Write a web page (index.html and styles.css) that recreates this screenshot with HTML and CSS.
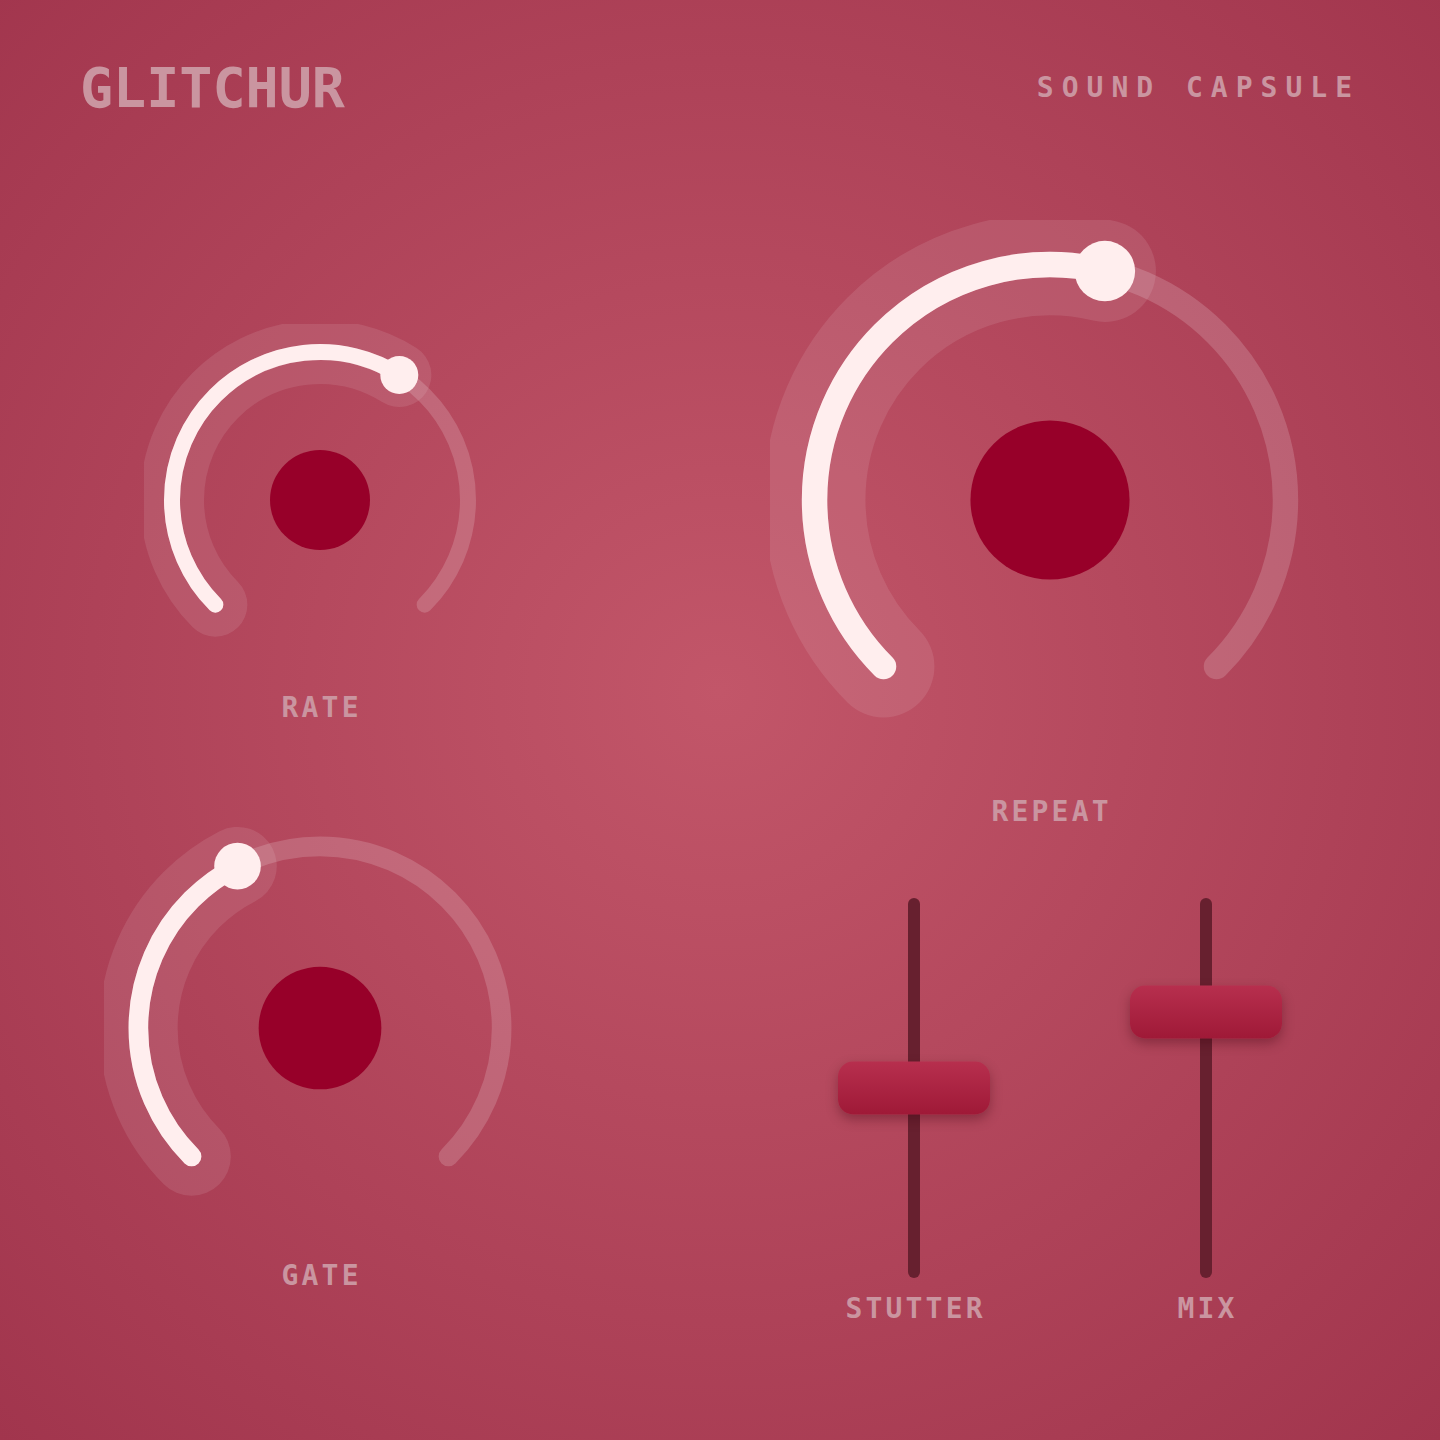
FILE: index.html
```html
<!DOCTYPE html>
<html lang="en">

<head>
	<meta charset="UTF-8">
	<meta name="viewport" content="width=device-width, initial-scale=1.0">
	<title>Glitchur - Sound Capsule</title>
	<link rel="stylesheet" href="styles.css">
</head>

<body>
	<div class="panel">
		<header class="header">
			<h1 class="brand">GLITCHUR</h1>
			<span class="tagline">SOUND CAPSULE</span>
		</header>

		<main class="controls">
			<div class="column column-left">
				<!-- RATE: value 0.62 -->
				<div class="knob">
					<svg class="knob-svg knob-sm" viewBox="0 0 352 352">
						<path class="knob-track" pathLength="270" d="M71.35 280.65 A148 148 0 1 1 280.65 280.65" />
						<path class="knob-halo" pathLength="270" stroke-dasharray="167.4 999" d="M71.35 280.65 A148 148 0 1 1 280.65 280.65" />
						<path class="knob-value" pathLength="270" stroke-dasharray="167.4 999" d="M71.35 280.65 A148 148 0 1 1 280.65 280.65" />
						<circle class="knob-thumb" cx="255.3" cy="51" r="19" />
						<circle class="knob-dot" cx="176" cy="176" r="50" />
					</svg>
					<div class="label">RATE</div>
				</div>

				<!-- GATE: value 0.40 -->
				<div class="knob knob-gate">
					<svg class="knob-svg knob-md" viewBox="0 0 352 352">
						<path class="knob-track" pathLength="270" d="M71.35 280.65 A148 148 0 1 1 280.65 280.65" />
						<path class="knob-halo" pathLength="270" stroke-dasharray="108 999" d="M71.35 280.65 A148 148 0 1 1 280.65 280.65" />
						<path class="knob-value" pathLength="270" stroke-dasharray="108 999" d="M71.35 280.65 A148 148 0 1 1 280.65 280.65" />
						<circle class="knob-thumb" cx="108.8" cy="44.1" r="19" />
						<circle class="knob-dot" cx="176" cy="176" r="50" />
					</svg>
					<div class="label">GATE</div>
				</div>
			</div>

			<div class="column column-right">
				<!-- REPEAT: value 0.55 -->
				<div class="knob">
					<svg class="knob-svg knob-lg" viewBox="0 0 352 352">
						<path class="knob-track" pathLength="270" d="M71.35 280.65 A148 148 0 1 1 280.65 280.65" />
						<path class="knob-halo" pathLength="270" stroke-dasharray="148.5 999" d="M71.35 280.65 A148 148 0 1 1 280.65 280.65" />
						<path class="knob-value" pathLength="270" stroke-dasharray="148.5 999" d="M71.35 280.65 A148 148 0 1 1 280.65 280.65" />
						<circle class="knob-thumb" cx="210.5" cy="32.1" r="19" />
						<circle class="knob-dot" cx="176" cy="176" r="50" />
					</svg>
					<div class="label">REPEAT</div>
				</div>

				<div class="sliders">
					<div class="slider">
						<div class="slider-rail">
							<div class="slider-track"></div>
							<div class="slider-thumb" style="top: 50%"></div>
						</div>
						<div class="label label-slider">STUTTER</div>
					</div>
					<div class="slider">
						<div class="slider-rail">
							<div class="slider-track"></div>
							<div class="slider-thumb" style="top: 30%"></div>
						</div>
						<div class="label label-slider">MIX</div>
					</div>
				</div>
			</div>
		</main>
	</div>
</body>

</html>
```

FILE: styles.css
```css
* {
	margin: 0;
	padding: 0;
	box-sizing: border-box;
}

:root {
	--bg-center: #c25669;
	--bg-edge: #a1354d;
	--text: #ca95a0;
	--white: #ffeeee;
	--dot: #970029;
	--rail: #67202f;
	--thumb-top: #b72f4e;
	--thumb-bottom: #9f1937;
}

body {
	min-height: 100vh;
	background: radial-gradient(circle at 50% 48%, var(--bg-center) 0%, var(--bg-edge) 100%);
	font-family: 'DejaVu Sans Mono', 'Liberation Mono', monospace;
	font-weight: 700;
	color: var(--text);
}

.panel {
	width: 1440px;
	height: 1440px;
	padding: 60px 80px 0;
}

.header {
	display: flex;
	justify-content: space-between;
	align-items: center;
	height: 56px;
}

.brand {
	font-size: 55px;
	line-height: 1;
	font-weight: 700;
}

.tagline {
	font-size: 28px;
	line-height: 1;
	letter-spacing: 8px;
}

.controls {
	display: grid;
	grid-template-columns: 480px 580px;
	column-gap: 200px;
}

.column {
	display: flex;
	flex-direction: column;
	align-items: center;
}

.column-left {
	padding-top: 208px;
}

.column-right {
	padding-top: 104px;
}

.knob {
	display: flex;
	flex-direction: column;
	align-items: center;
}

.knob-gate {
	margin-top: 90px;
}

.knob-svg {
	display: block;
	overflow: hidden;
}

.knob-sm {
	width: 352px;
	height: 352px;
}

.knob-md {
	width: 432px;
	height: 432px;
}

.knob-lg {
	width: 560px;
	height: 560px;
}

.knob-track,
.knob-halo,
.knob-value {
	fill: none;
	stroke-linecap: round;
}

.knob-track {
	stroke: rgba(255, 255, 255, 0.17);
	stroke-width: 16;
}

.knob-halo {
	stroke: rgba(255, 255, 255, 0.1);
	stroke-width: 64;
}

.knob-value {
	stroke: var(--white);
	stroke-width: 16;
}

.knob-thumb {
	fill: var(--white);
}

.knob-dot {
	fill: var(--dot);
}

.label {
	margin-top: 18px;
	font-size: 28px;
	line-height: 1;
	letter-spacing: 3.2px;
	margin-right: -3.2px;
}

.sliders {
	display: flex;
	justify-content: center;
	gap: 140px;
	margin-top: 72px;
	padding-left: 20px;
	width: 100%;
}

.slider {
	display: flex;
	flex-direction: column;
	align-items: center;
	width: 152px;
}

.slider-rail {
	position: relative;
	width: 152px;
	height: 380px;
	display: flex;
	justify-content: center;
}

.slider-track {
	width: 12px;
	height: 100%;
	border-radius: 6px;
	background: var(--rail);
}

.slider-thumb {
	position: absolute;
	left: 0;
	width: 152px;
	height: 53px;
	transform: translateY(-50%);
	border-radius: 15px;
	background: linear-gradient(180deg, var(--thumb-top), var(--thumb-bottom));
	box-shadow: 0 5px 12px rgba(60, 0, 15, 0.35);
}

.label-slider {
	margin-top: 17px;
}
```
